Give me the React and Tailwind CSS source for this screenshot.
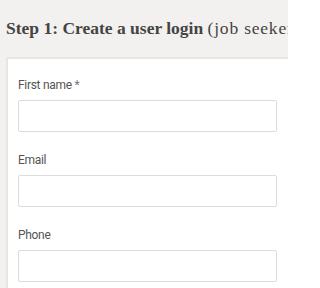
export default function App() {
  const fields = [
    { label: "First name", required: true },
    { label: "Email" },
    { label: "Phone" },
  ];

  return (
    <div className="w-[288px] h-[288px] overflow-hidden bg-[#f3f1ef]">
      <div className="w-[420px] pl-[6px] pt-[16px]">
        <h2
          className="text-[17.5px] leading-[24px] text-[#444] whitespace-nowrap"
          style={{ fontFamily: '"Liberation Serif", serif' }}
        >
          <span className="font-bold">Step 1: Create a user login</span>{" "}
          <span className="font-normal tracking-[0.8px]">(job seeker)</span>
        </h2>

        {/* Form card */}
        <div
          className="mt-[17px] bg-white border-2 border-[#e8e6e4] pl-[10px] pt-[19px] pb-6"
          style={{ fontFamily: "Roboto, sans-serif" }}
        >
          {fields.map((f) => (
            <div key={f.label} className="mb-[21px]">
              <label className="block text-[12px] leading-[14px] tracking-[-0.3px] text-[#555] mb-[8px]">
                {f.label}
                {f.required && <span className="text-[#777]"> *</span>}
              </label>
              <div className="w-[259px] h-[32px] border border-[#dcdcdc] rounded-[2px] bg-white" />
            </div>
          ))}
        </div>
      </div>
    </div>
  );
}
